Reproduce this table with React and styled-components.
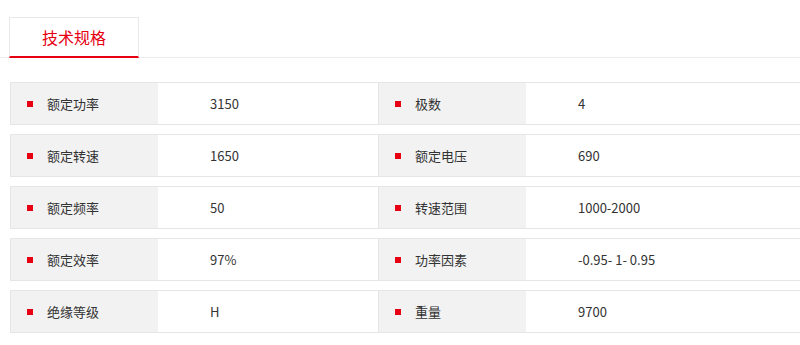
import React from 'react';
import styled, { createGlobalStyle } from 'styled-components';

const GlobalStyle = createGlobalStyle`
  body {
    margin: 0;
    background: #fff;
    font-family: "Microsoft YaHei", "Noto Sans CJK SC", "Liberation Sans", sans-serif;
    overflow: hidden;
  }
`

const Page = styled.div`
  width: 800px;
  overflow: hidden;
  padding-top: 17px;
`

const TabBar = styled.div`
  display: flex;
  padding-left: 9px;
  border-bottom: 1px solid #ececec;
`

const Tab = styled.div`
  width: 128px;
  height: 38px;
  display: flex;
  align-items: center;
  justify-content: center;
  border: 1px solid #e8e8e8;
  border-bottom: 2px solid #e60012;
  color: #e60012;
  font-size: 16px;
  margin-bottom: -1px;
`

const Table = styled.div`
  display: flex;
  flex-direction: column;
  gap: 9px;
  margin-top: 24px;
  margin-left: 10px;
  width: 810px;
`

const Row = styled.div`
  display: grid;
  grid-template-columns: 368px 1fr;
  height: 43px;
  box-sizing: border-box;
  border-top: 1px solid #e6e6e6;
  border-bottom: 1px solid #e6e6e6;
`

const Pair = styled.div`
  display: grid;
  grid-template-columns: 147px 1fr;
  border-left: 1px solid #e6e6e6;
  &:last-child {
    border-right: 1px solid #e6e6e6;
  }
`

const Label = styled.div`
  display: flex;
  align-items: center;
  background: #f2f2f2;
  padding-left: 16px;
  font-size: 13px;
  color: #333;
`

const Bullet = styled.span`
  width: 6px;
  height: 6px;
  background: #e60012;
  margin-right: 14px;
`

const Value = styled.div`
  display: flex;
  align-items: center;
  padding-left: 52px;
  font-size: 13px;
  color: #333;
  background: #fff;
`

const specs = [
  [['额定功率', '3150'], ['极数', '4']],
  [['额定转速', '1650'], ['额定电压', '690']],
  [['额定频率', '50'], ['转速范围', '1000-2000']],
  [['额定效率', '97%'], ['功率因素', '-0.95- 1- 0.95']],
  [['绝缘等级', 'H'], ['重量', '9700']],
]

const App = () => {
  return (<Page>
    <GlobalStyle />
    <TabBar>
      <Tab>技术规格</Tab>
    </TabBar>
    <Table>
      {specs.map((row, i) => (
        <Row key={i}>
          {row.map(([label, value]) => (
            <Pair key={label}>
              <Label><Bullet />{label}</Label>
              <Value>{value}</Value>
            </Pair>
          ))}
        </Row>
      ))}
    </Table>
  </Page>);
}

export default App;
